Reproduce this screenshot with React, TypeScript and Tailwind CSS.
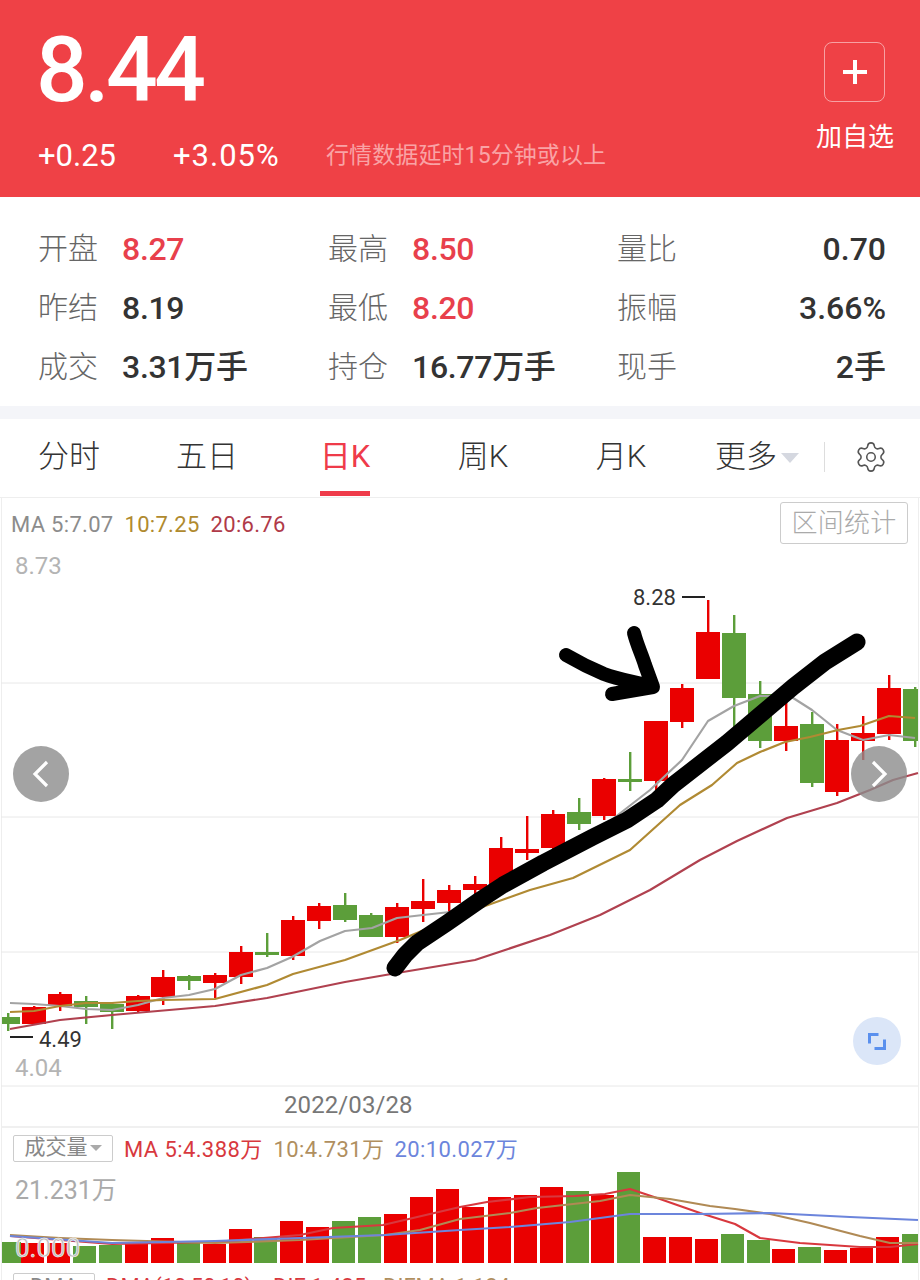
import { Settings } from 'lucide-react';

const cjk = '[font-family:Roboto,"Noto_Sans_CJK_SC",sans-serif]';

const RED = '#ea0000';
const GREEN = '#5c9e3a';

// [center x, body top, body bottom, wick top, wick bottom, up?]
const candles: [number, number, number, number, number, boolean][] = [
  [8, 1017, 1024, 1013, 1031, false],
  [34, 1007, 1024, 1006, 1025, true],
  [60, 994, 1006, 992, 1011, true],
  [86, 1001, 1007, 996, 1024, false],
  [112, 1004, 1012, 1003, 1029, false],
  [138, 996, 1011, 995, 1013, true],
  [163, 977, 997, 970, 1005, true],
  [189, 976, 981, 975, 990, false],
  [215, 975, 983, 973, 998, true],
  [241, 952, 977, 946, 984, true],
  [267, 952, 955, 933, 957, false],
  [293, 920, 956, 916, 960, true],
  [319, 906, 921, 903, 929, true],
  [345, 905, 920, 893, 922, false],
  [371, 915, 937, 913, 937, false],
  [397, 907, 937, 903, 943, true],
  [423, 901, 909, 879, 922, true],
  [449, 890, 903, 885, 912, true],
  [475, 884, 890, 876, 898, true],
  [501, 848, 885, 837, 888, true],
  [527, 849, 853, 816, 860, true],
  [553, 814, 848, 810, 855, true],
  [579, 812, 824, 798, 830, false],
  [604, 779, 816, 778, 820, true],
  [630, 779, 782, 752, 791, false],
  [656, 721, 781, 721, 790, true],
  [682, 688, 722, 684, 728, true],
  [708, 632, 679, 600, 632, true],
  [734, 633, 698, 615, 731, false],
  [760, 694, 741, 681, 748, false],
  [786, 726, 741, 700, 751, true],
  [812, 724, 783, 712, 787, false],
  [837, 740, 792, 724, 796, true],
  [863, 733, 741, 716, 760, true],
  [889, 688, 734, 675, 740, true],
  [915, 689, 741, 687, 747, false],
];

// [left x, width, top, up?]
const volumes: [number, number, number, boolean][] = [
  [2, 19, 1242, false], [21, 23, 1243, true], [47, 23, 1243, true], [73, 23, 1246, false],
  [99, 23, 1245, false], [125, 23, 1243, true], [151, 23, 1238, true], [177, 23, 1243, false],
  [203, 23, 1244, true], [229, 23, 1229, true], [254, 23, 1237, false], [280, 23, 1221, true],
  [306, 23, 1227, true], [332, 23, 1221, false], [358, 23, 1217, false], [384, 23, 1214, true],
  [410, 23, 1197, true], [436, 23, 1189, true], [462, 22, 1207, true], [488, 23, 1197, true],
  [514, 23, 1195, true], [540, 23, 1187, true], [566, 23, 1191, false], [591, 23, 1195, true],
  [617, 23, 1172, false], [643, 23, 1237, true], [669, 23, 1237, true], [695, 23, 1239, true],
  [721, 23, 1234, false], [747, 23, 1240, false], [772, 23, 1249, true], [798, 23, 1247, false],
  [824, 23, 1250, true], [850, 23, 1248, true], [876, 23, 1237, true], [902, 16, 1234, false],
];

const maGrey = '10,1003 34,1004 60,1006 86,1009 112,1010 138,1005 163,998 189,995 215,989 241,975 267,968 292,957 320,941 345,931 372,928 397,918 423,915 450,912 500,893 560,860 650,790 682,760 708,721 734,706 760,696 790,696 812,710 837,730 863,740 889,735 915,738';
const maGold = '10,1012 34,1011 60,1006 86,1003 112,1003 138,1001 163,1000 215,999 267,985 293,974 345,960 400,940 460,915 530,890 573,878 630,850 680,805 712,785 737,763 760,752 785,742 810,737 838,730 860,726 889,716 915,718';
const maWine = '10,1029 60,1020 112,1015 215,1006 267,998 345,982 397,973 475,960 550,935 600,915 650,890 700,860 737,841 787,818 837,803 870,790 893,780 918,773';

const volRed = '10,1236 60,1240 112,1244 163,1243 215,1242 300,1235 333,1228 383,1225 460,1207 487,1202 530,1197 575,1196 605,1194 630,1189 660,1199 700,1213 735,1224 760,1238 800,1243 860,1247 890,1247 918,1244';
const volGold = '10,1235 60,1238 112,1240 215,1243 300,1240 385,1235 420,1230 460,1219 510,1213 537,1208 600,1201 630,1195 670,1199 710,1206 735,1209 770,1214 810,1223 860,1236 890,1243 918,1243';
const volBlue = '10,1236 112,1243 215,1241 300,1238 385,1235 460,1230 510,1227 570,1222 630,1214 700,1214 770,1213 850,1217 918,1220';

const stats = [
  ['开盘', '8.27', true, '最高', '8.50', true, '量比', '0.70'],
  ['昨结', '8.19', false, '最低', '8.20', true, '振幅', '3.66%'],
  ['成交', '3.31万手', false, '持仓', '16.77万手', false, '现手', '2手'],
] as const;

const tabs = ['分时', '五日', '日K', '周K', '月K'];

function Stat({ label, value, red }: { label: string; value: string; red: boolean }) {
  return (
    <div className="flex h-[59px] items-center">
      <span className="w-[84px] text-[30px] font-light text-[#666]">{label}</span>
      <span className={`text-[32px] font-medium tracking-[-0.3px] ${red ? 'text-[#e8404c]' : 'text-[#333]'}`}>{value}</span>
    </div>
  );
}

function Header() {
  return (
    <div className="flex h-[197px] justify-between bg-[#ef4146] pl-[36px] pr-[26px] text-white">
      <div>
        <div className="mt-[18px] h-[104px] text-[91px] font-medium leading-[104px] tracking-[-3.5px]">8.44</div>
        <div className="ml-[2px] mt-[15px] flex items-center">
          <span className="w-[135px] text-[31px] leading-[38px]">+0.25</span>
          <span className="w-[153px] text-[31px] leading-[38px] tracking-[1px]">+3.05%</span>
          <span className="text-[23px] leading-[38px] tracking-[0.1px] text-[#f9a3a5]">行情数据延时15分钟或以上</span>
        </div>
      </div>
      <div className="flex flex-col items-center pt-[42px]">
        <button className="flex h-[60px] w-[61px] items-center justify-center rounded-[8px] border border-white/50">
          <svg width="26" height="26" viewBox="0 0 26 26" fill="none" stroke="white" strokeWidth="4">
            <path d="M13 1v24M1 13h24" />
          </svg>
        </button>
        <span className="mt-[18px] text-[26px] leading-[34px]">加自选</span>
      </div>
    </div>
  );
}

function Tabs() {
  return (
    <div className="flex h-[79px] items-stretch border-b border-[#eee] text-[31px] font-light text-[#333]">
      {tabs.map((t) => (
        <div key={t} className="flex w-[138px] justify-center">
          <span
            className={`flex h-[77px] items-center border-b-[5px] pt-[5px] ${
              t === '日K' ? 'border-[#ef3b4a] font-normal text-[#ef3b4a]' : 'border-transparent'
            }`}
          >
            {t}
          </span>
        </div>
      ))}
      <div className="flex w-[134px] items-center justify-center pb-[1px]">
        更多
        <span className="ml-[4px] h-0 w-0 border-x-[9px] border-t-[10px] border-x-transparent border-t-[#d5d8e0]" />
      </div>
      <div className="mb-[5px] mt-[23px] h-[30px] w-px bg-[#ddd]" />
      <div className="flex flex-1 items-center pb-[3px] pl-[29px]">
        <Settings size={34} strokeWidth={1.1} color="#555" />
      </div>
    </div>
  );
}

function KChart() {
  return (
    <svg width="920" height="543" viewBox="0 544 920 543" className="block">
      {[683, 817, 952, 1086].map((y) => (
        <line key={y} x1="1" x2="918" y1={y} y2={y} stroke="#e8e8e8" strokeWidth="1" />
      ))}
      {candles.map(([x, top, bottom, wt, wb, up], i) => {
        const c = up ? RED : GREEN;
        const w = Math.min(x + 12, 918) - Math.max(x - 12, 2);
        return (
          <g key={i} fill={c}>
            <rect x={x - 1} y={wt} width="2.4" height={wb - wt} />
            <rect x={Math.max(x - 12, 2)} y={top} width={w} height={bottom - top} />
          </g>
        );
      })}
      <g fill="none" strokeWidth="2.2" strokeLinejoin="round">
        <polyline points={maGrey} stroke="#a3a3a3" />
        <polyline points={maGold} stroke="#b08a33" />
        <polyline points={maWine} stroke="#b0414f" />
      </g>
      <g fill="none" stroke="#000" strokeLinecap="round" strokeLinejoin="round">
        <polyline
          strokeWidth="17"
          points="395,968 405,955 417,943 447,923 480,900 503,885 543,863 593,837 627,820 657,800 673,785 727,743 760,715 793,687 825,662 857,642"
        />
        <path strokeWidth="14" d="M566 655C578 662 592 669 604 674C620 680 636 682 653 687L612 694M634 633C637 645 642 655 645 665L653 687" />
      </g>
      <text x="15" y="574" fontSize="24" fill="#b4b4b4" fontFamily="Roboto">8.73</text>
      <text x="633" y="605" fontSize="22" fill="#333" fontFamily="Roboto">8.28</text>
      <rect x="682" y="596" width="23" height="2" fill="#222" />
      <rect x="10" y="1036" width="23" height="2" fill="#222" />
      <text x="39" y="1047" fontSize="22" fill="#333" fontFamily="Roboto">4.49</text>
      <text x="15" y="1076" fontSize="24" fill="#b4b4b4" fontFamily="Roboto">4.04</text>
    </svg>
  );
}

function VolumeChart() {
  return (
    <svg width="920" height="108" viewBox="0 1165 920 108" className="block">
      {volumes.map(([x, w, top, up], i) => (
        <rect key={i} x={x} y={top} width={w} height={1263 - top} fill={up ? RED : GREEN} />
      ))}
      <g fill="none" strokeWidth="2.2" strokeLinejoin="round">
        <polyline points={volRed} stroke="#d8383e" />
        <polyline points={volGold} stroke="#b08a55" />
        <polyline points={volBlue} stroke="#6c85dc" />
      </g>
      <text x="15" y="1199" fontSize="25" fill="#aaa" fontFamily="Roboto, 'Noto Sans CJK SC', sans-serif">21.231万</text>
      <text x="15" y="1257" fontSize="26" fill="#bbb" stroke="#fff" strokeWidth="0.6" fontFamily="Roboto">0.000</text>
    </svg>
  );
}

function RoundArrow({ dir, className }: { dir: 'left' | 'right'; className: string }) {
  return (
    <div className={`absolute flex h-[56px] w-[56px] items-center justify-center rounded-full bg-[#8c8c8c]/80 ${className}`}>
      <svg width="28" height="28" viewBox="0 0 28 28" fill="none" stroke="white" strokeWidth="3.2">
        <path d={dir === 'left' ? 'M20 2L8 14l12 12' : 'M8 2l12 12L8 26'} />
      </svg>
    </div>
  );
}

export default function App() {
  return (
    <div className={`h-[1280px] w-[920px] overflow-hidden bg-white ${cjk}`}>
      <Header />
      <div className="h-[209px] bg-white pl-[38px] pr-[34px] pt-[22px]">
        {stats.map(([a, av, ar, b, bv, br, c, cv]) => (
          <div key={a} className="grid grid-cols-[290px_289px_1fr]">
            <Stat label={a} value={av} red={ar} />
            <Stat label={b} value={bv} red={br} />
            <div className="flex h-[59px] items-center justify-between">
              <span className="text-[30px] font-light text-[#666]">{c}</span>
              <span className="text-[32px] font-medium text-[#333]">{cv}</span>
            </div>
          </div>
        ))}
      </div>
      <div className="h-[13px] bg-[#f4f5f9]" />
      <Tabs />
      <div className="relative mx-px border-x border-[#eee]">
        <div className="flex h-[46px] justify-between pl-[9px] pr-[10px] pt-[4px] text-[22px] tracking-[0.3px]">
          <div className="flex gap-[11px] pt-[2px] leading-[42px]">
            <span className="text-[#8c8c8c]">MA 5:7.07</span>
            <span className="text-[#b08a2e]">10:7.25</span>
            <span className="text-[#b03a48]">20:6.76</span>
          </div>
          <button className="flex h-[42px] w-[128px] items-center justify-center rounded-[3px] border border-[#ccc] text-[26px] font-light text-[#aaa]">
            区间统计
          </button>
        </div>
        <div className="ml-[-2px]">
          <KChart />
        </div>
        <RoundArrow dir="left" className="left-[11px] top-[248px]" />
        <RoundArrow dir="right" className="left-[849px] top-[248px]" />
        <div className="absolute left-[851px] top-[519px] h-[48px] w-[48px] rounded-full bg-[#dbe6f8]">
          <svg width="48" height="48" viewBox="0 0 48 48" fill="none" stroke="#5a90ee" strokeWidth="3">
            <path d="M16.5 26.5V17.5H25.5M31.5 22.5V31.5H21.5" />
          </svg>
        </div>
        <div className="flex h-[41px] items-center border-b-2 border-[#f0f0f0] pb-[3px] pl-[282px] text-[24px] tracking-[0.1px] text-[#777]">
          2022/03/28
        </div>
        <div className="flex h-[37px] items-center pl-[11px] pt-[3px] text-[22px] tracking-[0.4px]">
          <button className="flex h-[27px] w-[100px] items-center justify-center rounded-[2px] border border-[#ccc] text-[21px] tracking-normal text-[#888]">
            成交量
            <span className="ml-[2px] h-0 w-0 border-x-[6px] border-t-[6px] border-x-transparent border-t-[#aaa]" />
          </button>
          <span className="ml-[11px] pt-[2px] text-[#d8383e]">MA 5:4.388万</span>
          <span className="ml-[11px] pt-[2px] text-[#b08f5f]">10:4.731万</span>
          <span className="ml-[10px] pt-[2px] text-[#6c85dc]">20:10.027万</span>
        </div>
        <div className="ml-[-2px]">
          <VolumeChart />
        </div>
        <div className="flex h-[27px] items-start pl-[11px] text-[22px] leading-[27px]">
          <button className="flex h-[27px] w-[82px] items-center justify-center rounded-[2px] border border-[#ccc] text-[#888]">DMA</button>
          <span className="ml-[11px] w-[167px] text-[#d8383e]">DMA(10,50,10):</span>
          <span className="w-[110px] text-[#d8383e]">DIF:1.435</span>
          <span className="text-[#b08f5f]">DIFMA:1.124</span>
        </div>
      </div>
    </div>
  );
}
